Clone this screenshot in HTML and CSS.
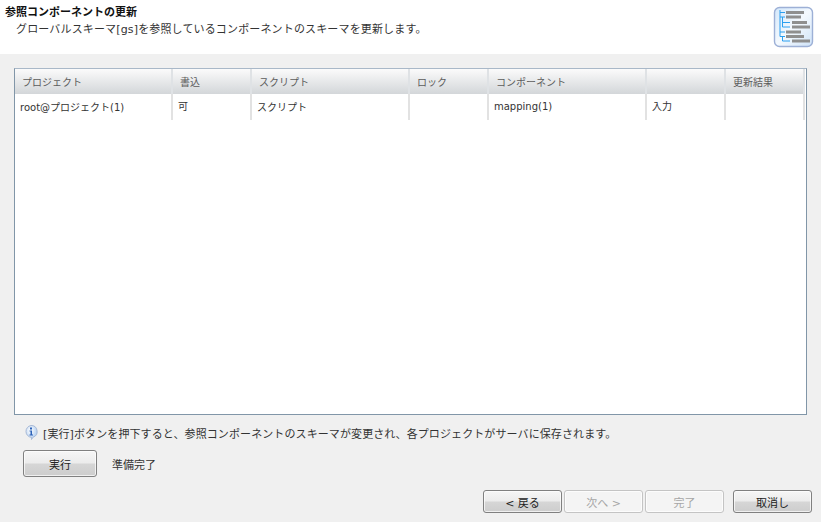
FILE: index.html
```html
<!DOCTYPE html>
<html lang="ja">
<head>
<meta charset="utf-8">
<title>参照コンポーネントの更新</title>
<link rel="stylesheet" href="styles.css">
</head>
<body>
<div class="dialog">
  <header class="banner">
    <div class="banner-text">
      <div class="banner-title">参照コンポーネントの更新</div>
      <div class="banner-sub">グローバルスキーマ[gs]を参照しているコンポーネントのスキーマを更新します。</div>
    </div>
    <svg class="banner-icon" width="41" height="42" viewBox="0 0 41 42">
      <defs>
        <linearGradient id="bg" x1="0" y1="0" x2="1" y2="1">
          <stop offset="0" stop-color="#d4e8fb"/>
          <stop offset="0.5" stop-color="#f4f9fe"/>
          <stop offset="1" stop-color="#cfe3f8"/>
        </linearGradient>
      </defs>
      <rect x="1.5" y="1.5" width="38" height="39" rx="5" fill="url(#bg)" stroke="#9db0d6" stroke-width="1.4"/>
      <path d="M7 4V30.5M7 6.5H12M7 11H12M9.5 11V21M9.5 16.5H17M9.5 21H17M7 26H12M7 30.5H12M9.5 30.5V35H17" fill="none" stroke="#2a9ff0" stroke-width="1"/>
      <g fill="#8f8f8f">
        <rect x="13" y="5" width="18" height="3"/>
        <rect x="13" y="9.5" width="15" height="3"/>
        <rect x="19" y="15" width="15" height="3"/>
        <rect x="19" y="19.5" width="18" height="3"/>
        <rect x="13" y="24.5" width="15" height="3"/>
        <rect x="13" y="29" width="18" height="3"/>
        <rect x="19" y="33.5" width="18" height="3"/>
      </g>
    </svg>
  </header>

  <main class="content">
    <div class="panel">
      <table class="grid">
        <colgroup>
          <col class="c1"><col class="c2"><col class="c3"><col class="c4"><col class="c5"><col class="c6"><col class="c7">
        </colgroup>
        <thead>
          <tr>
            <th>プロジェクト</th><th>書込</th><th>スクリプト</th><th>ロック</th><th>コンポーネント</th><th></th><th>更新結果</th>
          </tr>
        </thead>
        <tbody>
          <tr>
            <td>root@プロジェクト(1)</td><td class="up">可</td><td>スクリプト</td><td></td><td>mapping(1)</td><td class="up">入力</td><td></td>
          </tr>
        </tbody>
      </table>
    </div>

    <div class="info">
      <svg class="info-icon" width="16" height="17" viewBox="0 0 16 17">
        <defs>
          <radialGradient id="ib" cx="0.4" cy="0.35" r="0.7">
            <stop offset="0" stop-color="#ffffff"/>
            <stop offset="1" stop-color="#a9c8ee"/>
          </radialGradient>
        </defs>
        <path d="M8 1.5a6 6 0 0 1 2 11.7L8.5 15.5V13.4A6 6 0 0 1 8 1.5Z" fill="url(#ib)" stroke="#a7b9d6" stroke-width="1"/>
        <rect x="7" y="3.5" width="2" height="2" fill="#2c62b8"/>
        <path d="M6.5 6.5H9V10.5H10V11.5H6.5V10.5H7.5V7.5H6.5Z" fill="#2c62b8"/>
      </svg>
      <span>[実行]ボタンを押下すると、参照コンポーネントのスキーマが変更され、各プロジェクトがサーバに保存されます。</span>
    </div>

    <div class="run-row">
      <button class="btn btn-run" type="button">実行</button>
      <span class="status">準備完了</span>
    </div>

    <div class="nav-row">
      <button class="btn" type="button">&lt; 戻る</button>
      <button class="btn" type="button" disabled>次へ &gt;</button>
      <button class="btn" type="button" disabled>完了</button>
      <button class="btn btn-cancel" type="button">取消し</button>
    </div>
  </main>
</div>
</body>
</html>
```

FILE: styles.css
```css
* { box-sizing: border-box; }

html, body {
  margin: 0;
  padding: 0;
  height: 100%;
}

body {
  font-family: "DejaVu Sans", "Noto Sans CJK JP", sans-serif;
  font-size: 11px;
  color: #222;
  background: #f0f0f0;
  overflow: hidden;
}

.dialog {
  width: 821px;
  height: 522px;
  display: flex;
  flex-direction: column;
}

.banner {
  height: 54px;
  background: #fff;
  display: flex;
  justify-content: space-between;
  align-items: flex-start;
  padding: 5px 7px 0 5px;
}

.banner-title {
  font-weight: 700;
  line-height: 15px;
  color: #111;
}

.banner-sub {
  padding-left: 11px;
  margin-top: 2px;
  line-height: 15px;
  letter-spacing: .15px;
  color: #333;
}

.banner-icon { margin-top: 1px; }

.content {
  flex: 1;
  display: flex;
  flex-direction: column;
  padding: 14px 9px 9px 14px;
}

.panel {
  width: 793px;
  height: 347px;
  background: #fff;
  border: 1px solid #8196a8;
  border-top-color: #a9b8c8;
}

.grid {
  border-collapse: separate;
  border-spacing: 0;
  table-layout: fixed;
  width: 790px;
  font-size: 10px;
}

.c1 { width: 158px; }
.c2 { width: 79px; }
.c3 { width: 158px; }
.c4 { width: 79px; }
.c5 { width: 158px; }
.c6 { width: 79px; }
.c7 { width: 79px; }

.grid th {
  height: 25px;
  padding: 0 0 1px 7px;
  font-weight: 400;
  text-align: left;
  color: #5c5c5c;
  background: linear-gradient(#fbfbfb, #d3d6d9);
  border-right: 2px solid #dfe2e5;
}

.grid td {
  height: 26px;
  padding: 0 0 1px 5px;
  color: #333;
  border-right: 2px solid #e2e2e2;
  white-space: nowrap;
}

.grid td.up { padding-bottom: 3px; }

.info {
  height: 35px;
  display: flex;
  align-items: center;
  gap: 4px;
  padding-left: 9px;
  letter-spacing: .1px;
  color: #333;
}

.info-icon { flex: none; }

.run-row {
  display: flex;
  align-items: center;
  gap: 15px;
  padding-left: 9px;
}

.status { color: #333; }

.btn {
  font: inherit;
  width: 79px;
  height: 23px;
  padding: 0;
  color: #222;
  border: 1px solid #808080;
  border-radius: 3px;
  background: linear-gradient(#f6f6f6 0, #ececec 48%, #d6d6d6 52%, #cdcdcd 100%);
  box-shadow: inset 0 0 0 1px rgba(255,255,255,.7);
}

.btn-run {
  width: 74px;
  height: 27px;
}

.btn:disabled {
  color: #a6a6a6;
  border-color: #c4c4c4;
  background: #f4f4f4;
}

.nav-row {
  display: flex;
  gap: 2px;
  justify-content: flex-end;
  margin-top: 13px;
}

.btn-cancel { margin-left: 7px; }
```
